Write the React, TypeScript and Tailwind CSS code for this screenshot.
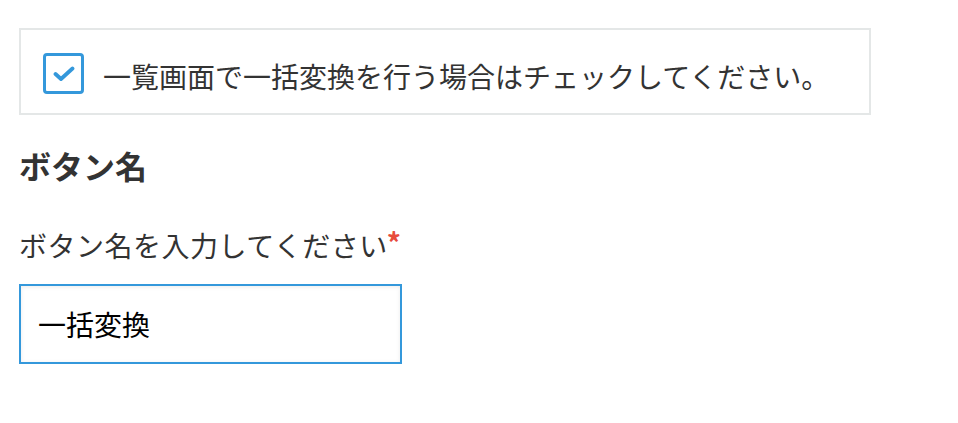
import React from 'react';

const font = { fontFamily: '"Noto Sans CJK JP", "Noto Sans", sans-serif' };

const CheckIcon = () => (
  <svg width="22" height="16" viewBox="0 0 22 16" fill="none">
    <path d="M2.5 8 L8 13 L19.5 2.5" stroke="#3498db" strokeWidth="3.8" strokeLinecap="round" strokeLinejoin="round" />
  </svg>
);

const App = () => {
  return (
    <div className="bg-white w-[958px] h-[423px] pt-[28px] pl-[19px] text-[#333333]" style={font}>
      {/* Bulk convert option */}
      <div className="w-[852px] h-[87px] border-2 border-[#e4e7e7] flex items-center pl-[22px]">
        <div className="w-[41px] h-[41px] border-[3px] border-[#3498db] rounded-[4px] flex items-center justify-center mt-[4px]">
          <CheckIcon />
        </div>
        <span className="ml-[19px] text-[28px] leading-[30px] mt-[8px]">
          一覧画面で一括変換を行う場合はチェックしてください。
        </span>
      </div>

      {/* Button name */}
      <h2 className="mt-[34px] text-[32px] leading-[32px] font-bold">ボタン名</h2>

      <label className="block mt-[50px] text-[28px] leading-[29px] tracking-[0.5px]">
        ボタン名を入力してください
        <span className="relative -top-[3px] text-[#e74c3c] font-bold ml-[-1px] leading-none">*</span>
      </label>

      <input
        type="text"
        defaultValue="一括変換"
        className="mt-[24px] w-[383px] h-[80px] border-2 border-[#3498db] pl-[17px] text-[28px] text-black outline-none shadow-[inset_0_1px_4px_rgba(0,0,0,0.08)]"
        style={font}
      />
    </div>
  );
};

export default App;
